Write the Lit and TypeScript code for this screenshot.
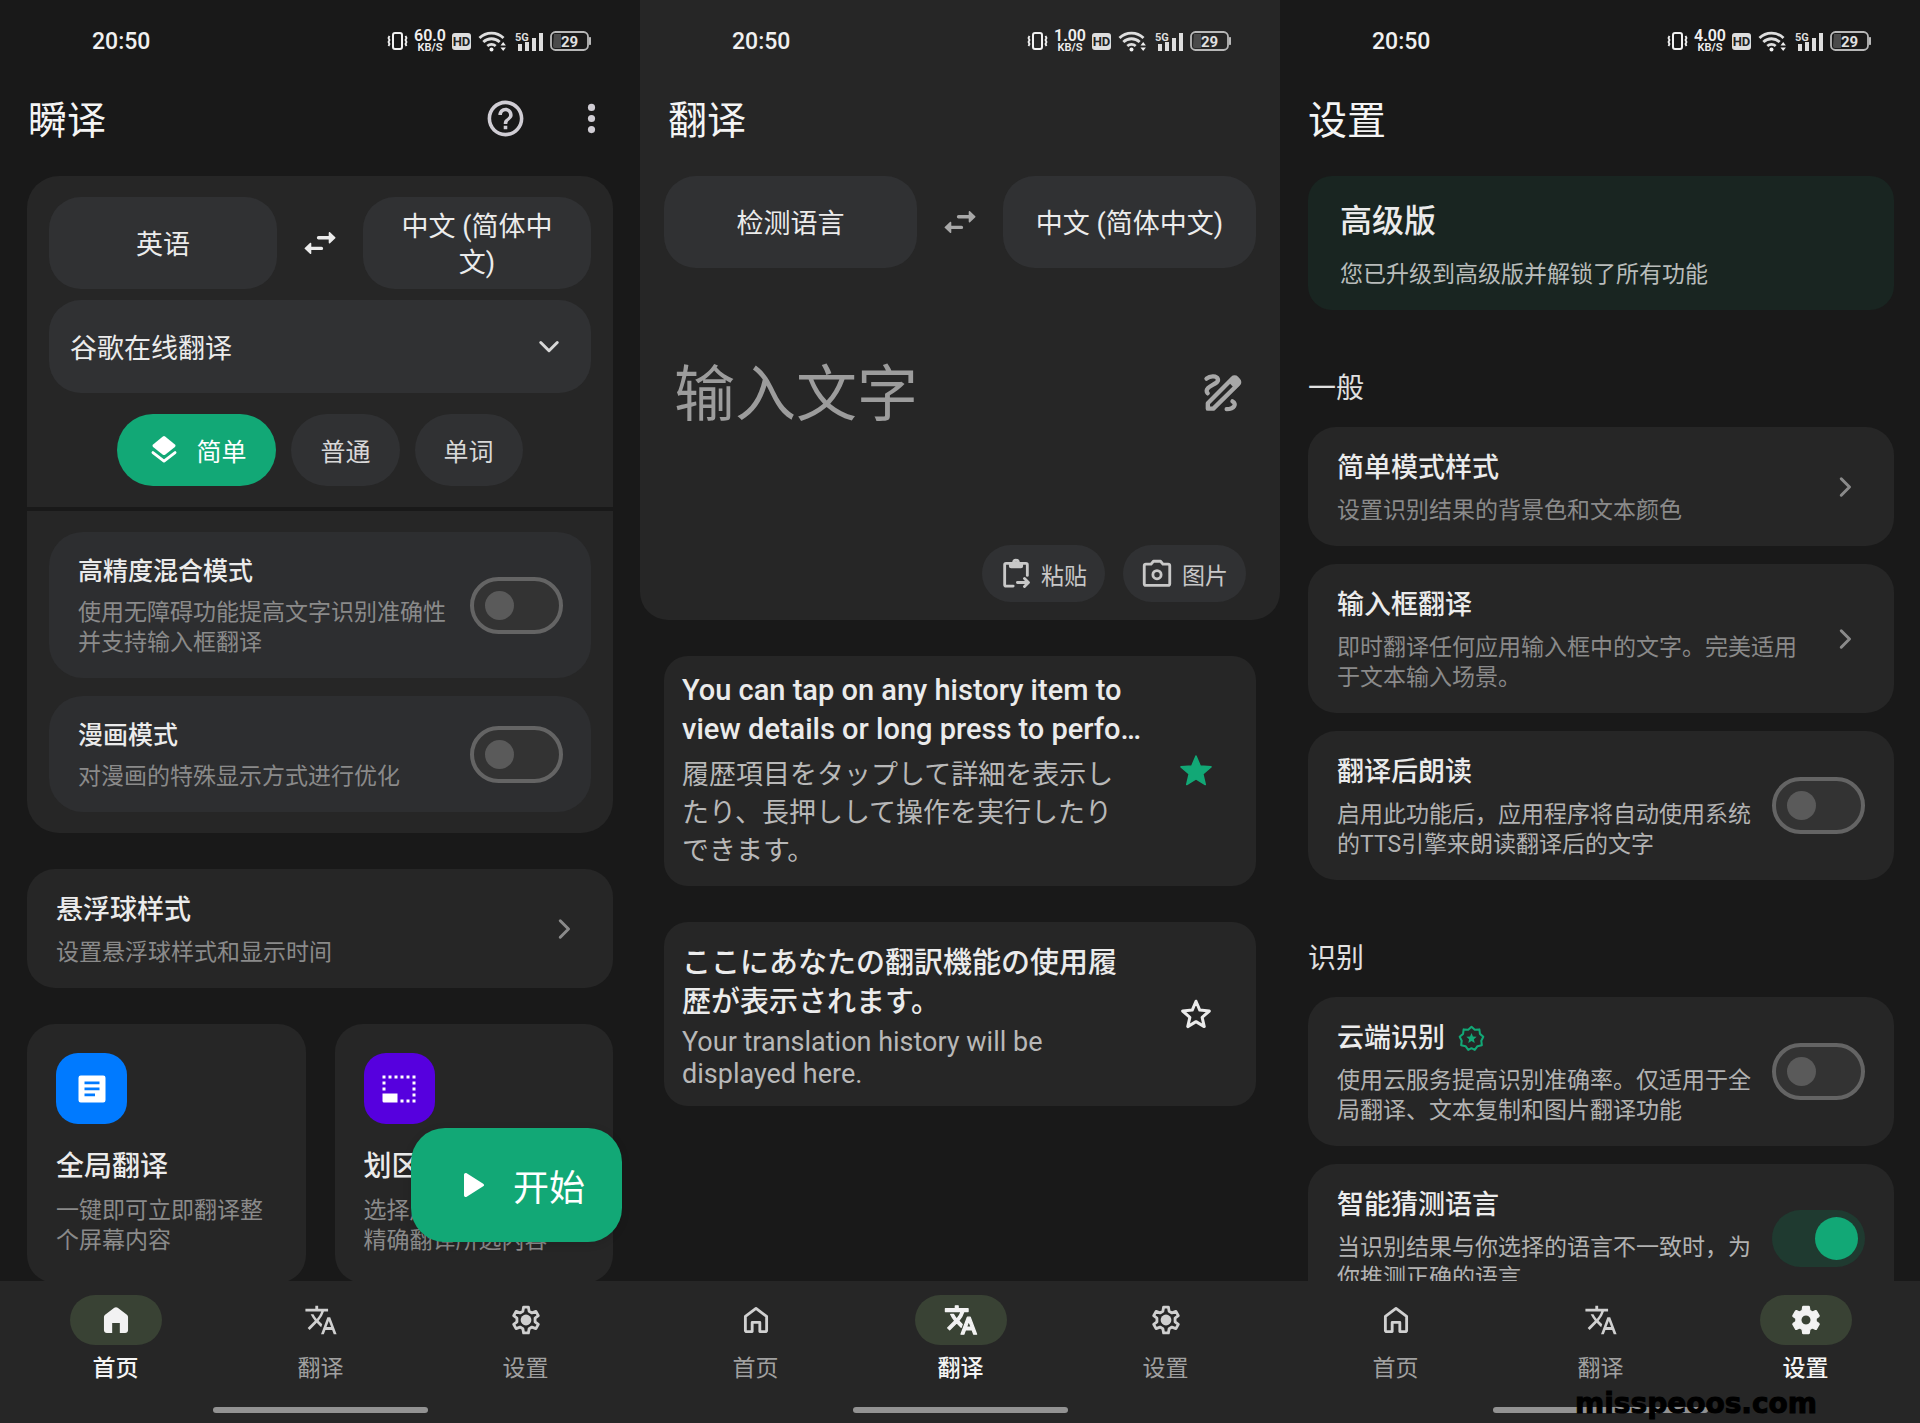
import { LitElement, html, css, svg, nothing } from "lit";
import { customElement, property, state } from "lit/decorators.js";
import { classMap } from "lit/directives/class-map.js";

const base = css`
  *,
  *::before {
    box-sizing: border-box;
  }
  button,
  select,
  input {
    font: inherit;
    color: inherit;
    border: 0;
    margin: 0;
    padding: 0;
    background: none;
  }
  button,
  select,
  a {
    cursor: pointer;
  }
  h1,
  h2,
  h3,
  p {
    margin: 0;
    font-weight: 400;
  }
  svg {
    display: block;
    flex: none;
    fill: currentColor;
  }
  .line {
    fill: none;
    stroke: currentColor;
    stroke-width: 2;
    stroke-linecap: round;
    stroke-linejoin: round;
  }
`;

const GEAR =
  "M19.14 12.94c.04-.3.06-.61.06-.94 0-.32-.02-.64-.07-.94l2.03-1.58a.49.49 0 0 0 .12-.61l-1.92-3.32a.49.49 0 0 0-.59-.22l-2.39.96c-.5-.38-1.03-.7-1.62-.94l-.36-2.54a.48.48 0 0 0-.48-.41h-3.84c-.24 0-.43.17-.47.41l-.36 2.54c-.59.24-1.13.57-1.62.94l-2.39-.96c-.22-.08-.47 0-.59.22L2.74 8.87c-.12.21-.08.47.12.61l2.03 1.58c-.05.3-.09.63-.09.94s.02.64.07.94l-2.03 1.58a.49.49 0 0 0-.12.61l1.92 3.32c.12.22.37.29.59.22l2.39-.96c.5.38 1.03.7 1.62.94l.36 2.54c.05.24.24.41.48.41h3.84c.24 0 .44-.17.47-.41l.36-2.54c.59-.24 1.13-.56 1.62-.94l2.39.96c.22.08.47 0 .59-.22l1.92-3.32a.49.49 0 0 0-.12-.61l-2.01-1.58zM12 15.6A3.6 3.6 0 1 1 12 8.4a3.6 3.6 0 0 1 0 7.2z";
const TRANSLATE =
  "M12.87 15.07l-2.54-2.51.03-.03A17.52 17.52 0 0 0 14.07 6H17V4h-7V2H8v2H1v2h11.17C11.5 7.92 10.44 9.75 9 11.35 8.07 10.32 7.3 9.19 6.69 8h-2c.73 1.63 1.73 3.17 2.98 4.56l-5.09 5.02L4 19l5-5 3.11 3.11.76-2.04zM18.5 10h-2L12 22h2l1.12-3h4.75L21 22h2l-4.5-12zm-2.62 7l1.62-4.33L19.12 17h-3.24z";
const STAR =
  "M12 17.27L18.18 21l-1.64-7.03L22 9.24l-7.19-.61L12 2 9.19 8.63 2 9.24l5.46 4.73L5.82 21z";

const icons: Record<string, unknown> = {
  help: svg`<path d="M11 18h2v-2h-2v2zm1-16C6.48 2 2 6.48 2 12s4.48 10 10 10 10-4.48 10-10S17.52 2 12 2zm0 18c-4.41 0-8-3.59-8-8s3.59-8 8-8 8 3.59 8 8-3.59 8-8 8zm0-14c-2.21 0-4 1.79-4 4h2c0-1.1.9-2 2-2s2 .9 2 2c0 2-3 1.75-3 5h2c0-2.25 3-2.5 3-5 0-2.21-1.79-4-4-4z"/>`,
  more: svg`<circle cx="12" cy="5.8" r="2"/><circle cx="12" cy="12" r="2"/><circle cx="12" cy="18.2" r="2"/>`,
  swap: svg`<path d="M11 7.400h6.800V5.300c0-.6.500-.8.900-.4l3.500 3.300c.2.200.2.400 0 .6l-3.500 3.300c-.4.400-.9.200-.9-.4V9.600H11a1.100 1.100 0 0 1 0-2.200zM13 14.500H6.200v-2.100c0-.6-.5-.8-.9-.4l-3.500 3.300c-.2.200-.2.400 0 .6l3.500 3.300c.4.400.9.200.9-.4v-2.100H13a1.100 1.100 0 0 0 0-2.200z"/>`,
  down: svg`<path class="line" d="M6.500 9l5.500 5.500L17.500 9"/>`,
  right: svg`<path class="line" d="M9.500 6.500l5.500 5.500-5.500 5.500"/>`,
  layers: svg`<path d="M11.200 2.500a1.300 1.300 0 0 1 1.600 0l6.900 5.600a1.200 1.200 0 0 1 0 1.800l-6.900 5.400a1.300 1.300 0 0 1-1.600 0L4.300 9.900a1.200 1.200 0 0 1 0-1.800z"/><path class="line" d="M4.200 13.800l7.800 6 7.800-6"/>`,
  home: svg`<path class="line" d="M4.500 9.500L12 3.800l7.500 5.700v9.700a1 1 0 0 1-1 1h-3.800v-6.500H9.300v6.500H5.500a1 1 0 0 1-1-1z"/>`,
  homeOn: svg`<path d="M3.500 9.800c0-.6.300-1.100.8-1.500l6.500-5c.7-.5 1.700-.5 2.400 0l6.500 5c.5.4.8.9.8 1.500V19.200c0 1.100-.9 2-2 2h-3.800v-7H9.300v7H5.500c-1.100 0-2-.9-2-2z"/>`,
  translate: svg`<path d=${TRANSLATE}/>`,
  translateOn: svg`<path stroke="currentColor" stroke-width=".9" stroke-linejoin="round" d=${TRANSLATE}/>`,
  gear: svg`<path class="line" d="M10.300 2.900h3.400l.5 2.900 2 1.200 2.800-1.100 1.700 3-2.300 1.800v2.600l2.300 1.800-1.700 3-2.800-1.100-2 1.200-.5 2.900h-3.400l-.5-2.900-2-1.200L5 18.100l-1.700-3 2.300-1.800v-2.600L3.300 8.900l1.700-3L7.800 7l2-1.200z"/><circle cx="12" cy="12" r="3.800"/>`,
  gearOn: svg`<path stroke="currentColor" stroke-width=".8" stroke-linejoin="round" d=${GEAR}/>`,
  article: svg`<path fill-rule="evenodd" d="M4.500 3h15A1.500 1.500 0 0 1 21 4.500v15a1.500 1.500 0 0 1-1.500 1.500h-15A1.500 1.500 0 0 1 3 19.500v-15A1.500 1.500 0 0 1 4.500 3zM7 7v1.900h10V7zm0 4v1.900h10V11zm0 4v1.900h7V15z"/>`,
  region: svg`<path d="M1 3h2v2H1zm4 0h2v2H5zm4 0h2v2H9zm4 0h2v2h-2zm4 0h2v2h-2zm4 0h2v2h-2zM1 7h2v2H1zm20 0h2v2h-2zM1 11h2v2H1zm20 0h2v2h-2zm0 4h2v2h-2zm-8 4h2v2h-2zm4 0h2v2h-2zm4 0h2v2h-2zM1 15h10v6H2a1 1 0 0 1-1-1z"/>`,
  play: svg`<path d="M6 5.200c0-1 1-1.500 1.800-1l11 6.900c.8.5.8 1.300 0 1.800l-11 6.900c-.8.5-1.800 0-1.800-1z"/>`,
  draw: svg`<g class="line"><path stroke-width="2.600" d="M2.900 21.400v-3.300L17.800 3.200a1.600 1.600 0 0 1 2.300 0l1.100 1.100a1.600 1.600 0 0 1 0 2.300L6.200 21.400z"/><path stroke-width="2.600" d="M2.100 3.400C4.500 1.400 8.200 1.700 8.900 3.600c1.100 3.100-6.700 3.700-6.700 7 0 .9.200 1.200.6 1.600M17.700 17c2.700 1.500 1.200 4.500-3.500 4.700"/></g><path d="M14.800 5L18.600 1.800l4.400 4.200-3.600 3.800z"/>`,
  paste: svg`<g class="line"><path d="M10 20.500H5a1 1 0 0 1-1-1v-14a1 1 0 0 1 1-1h14a1 1 0 0 1 1 1V13M13 18h7.500M18 15.200l2.800 2.800-2.800 2.800"/><circle cx="12" cy="4" r="1.700"/></g><path d="M7 5h3a2.200 2.200 0 0 0 4 0h3v1.500A1.500 1.500 0 0 1 15.500 8h-7A1.500 1.500 0 0 1 7 6.500z"/>`,
  camera: svg`<g class="line"><path d="M4.200 5h3.600l1.700-2h5l1.700 2h3.600a1.200 1.200 0 0 1 1.200 1.200v12.600a1.200 1.200 0 0 1-1.200 1.200H4.200A1.200 1.200 0 0 1 3 18.800V6.200A1.200 1.200 0 0 1 4.200 5z"/><circle cx="12" cy="12.500" r="2.900"/></g>`,
  star: svg`<path stroke="currentColor" stroke-width="1" stroke-linejoin="round" d=${STAR}/>`,
  starOff: svg`<path class="line" d="M12 3.500l2.500 5.900 6.400.6-4.800 4.200 1.400 6.200-5.500-3.300-5.500 3.300 1.400-6.200L3.100 10l6.400-.6z"/>`,
  badge: svg`<path fill="none" stroke="currentColor" stroke-width="1.800" stroke-linejoin="round" d="M12 1.500l2.900 2.700 4.100-.3.500 4 3 2.600-1.800 3.500.500 4-3.900.800-2.400 3.300L12 20.600l-2.900 1.500-2.400-3.300-3.900-.8.500-4L1.500 10.500l3-2.600.5-4 4.100.3z"/><path d="M12 7.200l1.300 3 3.300.3-2.500 2.200.8 3.200-2.900-1.700-2.900 1.700.8-3.200-2.500-2.200 3.300-.3z"/>`,
};

const icon = (name: string, size: number) =>
  html`<svg width=${size} height=${size} viewBox="0 0 24 24" aria-hidden="true">${icons[name]}</svg>`;

@customElement("phone-screen")
class PhoneScreen extends LitElement {
  @property() heading = "";
  @property() speed = "";
  @property() current = "home";

  static styles = [
    base,
    css`
      :host {
        display: flex;
        flex-direction: column;
        height: 100vh;
        min-width: 0;
        background: #191919;
      }
      .top {
        flex: none;
      }
      .top.raised {
        background: #262626;
      }
      .status {
        display: flex;
        align-items: center;
        height: 82px;
        padding: 0 48px 0 92px;
        color: #f0f0f0;
        font-family: Roboto, sans-serif;
      }
      .time {
        flex: 1;
        font-size: 23px;
        font-weight: 500;
      }
      .indicators {
        display: flex;
        align-items: center;
        gap: 6px;
      }
      .speed {
        display: grid;
        justify-items: center;
        width: 32px;
        font-size: 16px;
        line-height: 14px;
        font-weight: 600;
      }
      .unit {
        font-size: 11px;
        line-height: 10px;
      }
      .svgtext {
        font-family: Roboto, sans-serif;
        font-weight: 700;
      }
      .bar {
        display: flex;
        align-items: center;
        justify-content: space-between;
        height: 76px;
        padding: 0 27px 0 28px;
      }
      h1 {
        padding-top: 2px;
        font-size: 39px;
        line-height: 56px;
        color: #f4f4f4;
      }
      .view {
        position: relative;
        display: flex;
        flex-direction: column;
        flex: 1;
        min-height: 0;
      }
      .scroll {
        flex: 1;
        min-height: 0;
        overflow-y: auto;
        scrollbar-width: none;
      }
      nav {
        flex: none;
        background: #262626;
        padding: 14px 12px 10px 13px;
      }
      .tabs {
        display: flex;
      }
      .tab {
        flex: 1;
        display: flex;
        flex-direction: column;
        align-items: center;
        gap: 9px;
        font-size: 23px;
        line-height: 30px;
        color: #a0a0a0;
        text-decoration: none;
      }
      .pill {
        display: grid;
        place-items: center;
        width: 92px;
        height: 50px;
        border-radius: 25px;
        color: #d0d0d0;
      }
      .tab.on {
        color: #f4f4f4;
        font-weight: 500;
      }
      .on .pill {
        background: #394234;
        color: #f2f2f2;
      }
      .gesture {
        width: 215px;
        height: 6px;
        margin: 23px auto 0;
        border-radius: 3px;
        background: #929292;
      }
    `,
  ];

  private tab(id: string, glyph: string, label: string) {
    const on = this.current === id;
    return html`<a
      class=${classMap({ tab: true, on })}
      href="#${id}"
      aria-current=${on ? "page" : nothing}
      ><span class="pill">${icon(on ? glyph + "On" : glyph, 34)}</span>${label}</a
    >`;
  }

  render() {
    return html`
      <header class=${classMap({ top: true, raised: this.current === "translate" })}>
        <div class="status">
          <span class="time">20:50</span>
          <div class="indicators">
            <svg width="21" height="20" viewBox="0 0 21 20" aria-hidden="true">
              <rect x="6" y="2" width="9" height="16" rx="2" fill="none" stroke="currentColor" stroke-width="2" />
              <path d="M2.500 5l-1 2 1 2-1 2 1 2-1 2M18.500 5l1 2-1 2 1 2-1 2 1 2" fill="none" stroke="currentColor" stroke-width="1.800" />
            </svg>
            <div class="speed"><span>${this.speed}</span><span class="unit">KB/S</span></div>
            <svg width="19" height="17" viewBox="0 0 19 17">
              <rect width="19" height="17" rx="3" fill="#dedede" />
              <text class="svgtext" x="9.500" y="13" font-size="13" text-anchor="middle" fill="#222">HD</text>
            </svg>
            <svg width="32" height="22" viewBox="0 0 32 22" aria-hidden="true">
              <g fill="none" stroke="#dedede" stroke-width="2.800">
                <path d="M2.500 8a17 17 0 0 1 24 0M6.300 12a12 12 0 0 1 16.400 0M10.300 16a6.500 6.500 0 0 1 8.400 0" />
              </g>
              <circle cx="14.500" cy="19.400" r="2" />
              <path d="M23.500 15.500l2.700-3.500 2.700 3.500zM23.500 17.500h5.400l-2.700 3.500z" />
            </svg>
            <svg width="29" height="21" viewBox="0 0 29 21">
              <text class="svgtext" x="0" y="9.500" font-size="11" fill="#dedede">5G</text>
              <path d="M3 13h4v7H3zM10 11h4v9h-4zM17 7h4v13h-4zM24 2h4v18h-4z" fill="#dedede" />
            </svg>
            <svg width="42" height="20" viewBox="0 0 42 20">
              <path d="M4 3h7v14H5a2 2 0 0 1-2-2z" fill="#4a4a4a" />
              <rect x="1" y="1" width="37" height="18" rx="4.500" fill="none" stroke="#b8b8b8" stroke-width="1.800" />
              <path d="M39.500 6.500h1v7h-1z" stroke="#b8b8b8" />
              <text class="svgtext" x="19.500" y="15.500" font-size="15" text-anchor="middle" fill="#e0e0e0">29</text>
            </svg>
          </div>
        </div>
        <div class="bar">
          <h1>${this.heading}</h1>
          <slot name="actions"></slot>
        </div>
      </header>
      <div class="view">
        <div class="scroll"><slot></slot></div>
        <slot name="floating"></slot>
      </div>
      <nav>
        <div class="tabs">
          ${this.tab("home", "home", "首页")} ${this.tab("translate", "translate", "翻译")}
          ${this.tab("settings", "gear", "设置")}
        </div>
        <div class="gesture"></div>
      </nav>
    `;
  }
}

@customElement("setting-row")
class SettingRow extends LitElement {
  @property() heading = "";
  @property() detail = "";
  @property() kind: "link" | "switch" = "link";
  @property({ type: Boolean }) on = false;
  @property({ type: Boolean }) premium = false;
  @property({ type: Boolean, reflect: true }) nested = false;

  static styles = [
    base,
    css`
      :host {
        display: block;
      }
      .row {
        display: flex;
        align-items: center;
        gap: 12px;
        padding: 23px 29px 20px;
        border-radius: 28px;
        background: #262626;
        color: inherit;
        text-decoration: none;
        cursor: pointer;
      }
      :host([nested]) .row {
        padding: 24px 28px 20px 29px;
        border-radius: 34px;
        background: #2d2e30;
      }
      .copy {
        flex: 1;
        min-width: 0;
        display: grid;
        gap: 10px;
      }
      .title {
        display: flex;
        align-items: center;
        gap: 13px;
        font-size: 27px;
        line-height: 36px;
        font-weight: 500;
        color: #ebebeb;
      }
      :host([nested]) .title {
        font-size: 25px;
        line-height: 32px;
      }
      .detail {
        font-size: 23px;
        line-height: 30px;
        color: #b2b2b2;
      }
      .link .detail,
      :host([nested]) .detail {
        color: #8a8a8a;
      }
      .badge {
        color: #12a876;
      }
      .chevron {
        width: 42px;
        margin-bottom: 3px;
        padding-left: 4px;
        color: #8a8a8a;
      }
      input {
        appearance: none;
        flex: none;
        display: flex;
        align-items: center;
        width: 93px;
        height: 57px;
        margin-bottom: 3px;
        padding: 0 11px;
        border: 4px solid #646464;
        border-radius: 29px;
        background: #333;
        cursor: pointer;
      }
      input::before {
        content: "";
        width: 29px;
        height: 29px;
        border-radius: 50%;
        background: #5a5a5a;
      }
      input:checked {
        justify-content: flex-end;
        padding: 0 7px;
        border: 0;
        background: #1f3a30;
      }
      input:checked::before {
        width: 43px;
        height: 43px;
        background: #12a876;
      }
    `,
  ];

  render() {
    const copy = html`<span class="copy"
      ><span class="title"
        >${this.heading}${this.premium ? html`<span class="badge">${icon("badge", 27)}</span>` : nothing}</span
      ><span class="detail">${this.detail}</span></span
    >`;
    return this.kind === "switch"
      ? html`<label class="row">${copy}<input type="checkbox" role="switch" .checked=${this.on} /></label>`
      : html`<a class="row link" href="#detail">${copy}<span class="chevron">${icon("right", 36)}</span></a>`;
  }
}

interface Entry {
  lang: string;
  source: string;
  targetLang: string;
  target: string;
  starred: boolean;
}

@customElement("app-root")
class AppRoot extends LitElement {
  @state() private mode = "简单";

  private history: Entry[] = [
    {
      lang: "en",
      source: "You can tap on any history item to view details or long press to perfo…",
      targetLang: "ja",
      target: "履歴項目をタップして詳細を表示したり、長押しして操作を実行したりできます。",
      starred: true,
    },
    {
      lang: "ja",
      source: "ここにあなたの翻訳機能の使用履歴が表示されます。",
      targetLang: "en",
      target: "Your translation history will be displayed here.",
      starred: false,
    },
  ];

  static styles = [
    base,
    css`
      :host {
        display: block;
        position: relative;
        background: #191919;
        color: #ebebeb;
        font-family: Roboto, "Noto Sans CJK SC", sans-serif;
      }
      .screens {
        display: grid;
        grid-template-columns: repeat(3, minmax(0, 1fr));
      }
      .page {
        padding: 18px 27px 0;
      }
      .page.settings {
        padding: 18px 26px 0 28px;
      }
      .actions {
        display: flex;
        gap: 43px;
        margin-bottom: 4px;
        color: #d0cdd4;
      }
      .panel {
        padding: 21px 22px;
        background: #262626;
      }
      .panel.first {
        border-radius: 32px 32px 0 0;
      }
      .panel.last {
        display: grid;
        gap: 18px;
        margin-top: 4px;
        border-radius: 0 0 32px 32px;
      }
      .languages {
        display: grid;
        grid-template-columns: 1fr 86px 1fr;
        align-items: stretch;
      }
      .language {
        height: 92px;
        padding: 4px 30px 0;
        border-radius: 32px;
        background: #303133;
        font-size: 27px;
        line-height: 36px;
      }
      .swap {
        display: grid;
        place-items: center;
      }
      .swap.dim {
        color: #a8a8a8;
      }
      .engine {
        display: grid;
        align-items: center;
        height: 93px;
        margin-top: 11px;
        border-radius: 32px;
        background: #303133;
      }
      .engine select {
        grid-area: 1 / 1;
        appearance: none;
        height: 93px;
        padding: 4px 60px 0 21px;
        font-size: 27px;
      }
      .engine option {
        background: #303133;
      }
      .caret {
        grid-area: 1 / 1;
        justify-self: end;
        margin-right: 24px;
        color: #d8d8d8;
        pointer-events: none;
      }
      .modes {
        display: flex;
        justify-content: center;
        gap: 15px;
        margin-top: 21px;
      }
      .mode {
        display: flex;
        align-items: center;
        gap: 15px;
        height: 72px;
        padding: 0 29px;
        border-radius: 36px;
        background: #303133;
        font-size: 25px;
        color: #d8d8d8;
      }
      .mode.on {
        padding: 0 30px;
        background: #12a876;
        color: #fff;
      }
      .spaced {
        margin-top: 36px;
      }
      .features {
        display: grid;
        grid-template-columns: 1fr 1fr;
        gap: 29px;
        margin-top: 36px;
      }
      .feature {
        padding: 29px 29px 27px;
        border-radius: 28px;
        background: #262626;
        color: inherit;
        text-decoration: none;
      }
      .tile {
        display: grid;
        place-items: center;
        width: 71px;
        height: 71px;
        border-radius: 22px;
        color: #fff;
      }
      .tile.blue {
        background: #007aff;
      }
      .tile.violet {
        background: #5600de;
      }
      .feature h3 {
        margin-top: 25px;
        font-size: 28px;
        line-height: 36px;
        font-weight: 500;
      }
      .feature p {
        margin-top: 11px;
        font-size: 23px;
        line-height: 30px;
        color: #8a8a8a;
      }
      .start {
        position: absolute;
        right: 18px;
        bottom: 39px;
        display: flex;
        align-items: center;
        gap: 22px;
        height: 114px;
        padding: 0 37px 0 44px;
        border-radius: 34px;
        background: #12a876;
        box-shadow: 0 2px 8px rgba(0, 0, 0, 0.12);
        font-size: 36px;
        color: #fff;
      }
      .composer {
        padding: 18px 24px 18px;
        border-radius: 0 0 28px 28px;
        background: #262626;
      }
      .entry {
        display: flex;
        align-items: center;
        height: 90px;
        margin-top: 80px;
        padding: 0 13px 0 10px;
        color: #a8a8a8;
      }
      .entry input {
        flex: 1;
        min-width: 0;
        height: 94px;
        padding-top: 4px;
        font-size: 61px;
        outline: none;
      }
      .entry input::placeholder {
        color: #9c9c9c;
        opacity: 1;
      }
      .tools {
        display: flex;
        justify-content: flex-end;
        gap: 18px;
        margin: 107px 10px 0;
      }
      .tool {
        display: flex;
        align-items: center;
        gap: 8px;
        height: 57px;
        padding: 0 18px 0 17px;
        border-radius: 29px;
        background: #303133;
        font-size: 23px;
        color: #c8c8c8;
      }
      .history {
        display: grid;
        gap: 36px;
        margin: 36px 24px 0;
      }
      .record {
        display: grid;
        grid-template-columns: minmax(0, 463px) 1fr;
        column-gap: 8px;
        align-items: center;
        padding: 15px 18px 16px;
        border-radius: 24px;
        background: #262626;
      }
      .source {
        font-size: 29px;
        line-height: 39px;
        font-weight: 500;
      }
      .target {
        max-width: 455px;
        margin-top: 4px;
        font-size: 27px;
        line-height: 32px;
        color: #b8b8b8;
      }
      :lang(ja) {
        font-family: Roboto, "Noto Sans CJK JP", sans-serif;
      }
      .source:lang(ja) {
        margin-top: 7px;
      }
      .target:lang(ja) {
        margin-top: 7px;
        line-height: 38px;
      }
      .fav {
        justify-self: center;
      }
      .fav.on {
        color: #12a876;
      }
      .premium {
        padding: 25px 32px 20px;
        border-radius: 24px;
        background: #192521;
      }
      .premium h2 {
        font-size: 32px;
        line-height: 40px;
        font-weight: 500;
      }
      .premium p {
        margin-top: 19px;
        font-size: 23px;
        line-height: 30px;
        color: #b8bcba;
      }
      .group {
        margin: 61px 0 20px;
        font-size: 28px;
        line-height: 36px;
        color: #e0e0e0;
      }
      .rows {
        display: grid;
        gap: 18px;
      }
      .watermark {
        position: absolute;
        right: 103px;
        bottom: 3px;
        font-family: "DejaVu Sans", sans-serif;
        font-size: 28px;
        line-height: 32px;
        font-weight: 700;
        color: #000;
        -webkit-text-stroke: 1px #000;
      }
    `,
  ];

  private languages(from: string, to: string, dim: boolean) {
    return html`<div class="languages">
      <button class="language">${from}</button>
      <button class=${classMap({ swap: true, dim })} aria-label="交换语言">${icon("swap", 36)}</button>
      <button class="language">${to}</button>
    </div>`;
  }

  private home() {
    return html`<phone-screen heading="瞬译" speed="60.0" current="home">
      <div class="actions" slot="actions">
        <button aria-label="帮助">${icon("help", 43)}</button>
        <button aria-label="更多">${icon("more", 43)}</button>
      </div>
      <div class="page">
        <section class="panel first">
          ${this.languages("英语", "中文 (简体中文)", false)}
          <div class="engine">
            <select aria-label="翻译引擎">
              <option>谷歌在线翻译</option>
            </select>
            <span class="caret">${icon("down", 36)}</span>
          </div>
          <div class="modes">
            ${["简单", "普通", "单词"].map((name) => {
              const on = this.mode === name;
              return html`<button
                class=${classMap({ mode: true, on })}
                aria-pressed=${on}
                @click=${() => (this.mode = name)}
              >
                ${on ? icon("layers", 34) : nothing}${name}
              </button>`;
            })}
          </div>
        </section>
        <section class="panel last">
          <setting-row
            nested
            kind="switch"
            heading="高精度混合模式"
            detail="使用无障碍功能提高文字识别准确性并支持输入框翻译"
          ></setting-row>
          <setting-row nested kind="switch" heading="漫画模式" detail="对漫画的特殊显示方式进行优化"></setting-row>
        </section>
        <setting-row class="spaced" heading="悬浮球样式" detail="设置悬浮球样式和显示时间"></setting-row>
        <div class="features">
          <a class="feature" href="#full">
            <span class="tile blue">${icon("article", 36)}</span>
            <h3>全局翻译</h3>
            <p>一键即可立即翻译整个屏幕内容</p>
          </a>
          <a class="feature" href="#region">
            <span class="tile violet">${icon("region", 36)}</span>
            <h3>划区翻译</h3>
            <p>选择屏幕上的区域，精确翻译所选内容</p>
          </a>
        </div>
      </div>
      <button class="start" slot="floating">${icon("play", 36)}开始</button>
    </phone-screen>`;
  }

  private translate() {
    return html`<phone-screen heading="翻译" speed="1.00" current="translate">
      <section class="composer">
        ${this.languages("检测语言", "中文 (简体中文)", true)}
        <div class="entry">
          <input type="text" placeholder="输入文字" aria-label="输入文字" />
          <button aria-label="手写">${icon("draw", 40)}</button>
        </div>
        <div class="tools">
          <button class="tool">${icon("paste", 34)}粘贴</button>
          <button class="tool">${icon("camera", 34)}图片</button>
        </div>
      </section>
      <div class="history">
        ${this.history.map(
          (e) => html`<article class="record">
            <div>
              <p class="source" lang=${e.lang}>${e.source}</p>
              <p class="target" lang=${e.targetLang}>${e.target}</p>
            </div>
            <button class=${classMap({ fav: true, on: e.starred })} aria-label="收藏" aria-pressed=${e.starred}>
              ${icon(e.starred ? "star" : "starOff", 36)}
            </button>
          </article>`
        )}
      </div>
    </phone-screen>`;
  }

  private settings() {
    return html`<phone-screen heading="设置" speed="4.00" current="settings">
      <div class="page settings">
        <section class="premium">
          <h2>高级版</h2>
          <p>您已升级到高级版并解锁了所有功能</p>
        </section>
        <h2 class="group">一般</h2>
        <div class="rows">
          <setting-row heading="简单模式样式" detail="设置识别结果的背景色和文本颜色"></setting-row>
          <setting-row
            heading="输入框翻译"
            detail="即时翻译任何应用输入框中的文字。完美适用于文本输入场景。"
          ></setting-row>
          <setting-row
            kind="switch"
            heading="翻译后朗读"
            detail="启用此功能后，应用程序将自动使用系统的TTS引擎来朗读翻译后的文字"
          ></setting-row>
        </div>
        <h2 class="group">识别</h2>
        <div class="rows">
          <setting-row
            kind="switch"
            premium
            heading="云端识别"
            detail="使用云服务提高识别准确率。仅适用于全局翻译、文本复制和图片翻译功能"
          ></setting-row>
          <setting-row
            kind="switch"
            on
            heading="智能猜测语言"
            detail="当识别结果与你选择的语言不一致时，为你推测正确的语言"
          ></setting-row>
        </div>
      </div>
    </phone-screen>`;
  }

  render() {
    return html`<main class="screens">${this.home()}${this.translate()}${this.settings()}</main>
      <span class="watermark">misspeoos.com</span>`;
  }
}
